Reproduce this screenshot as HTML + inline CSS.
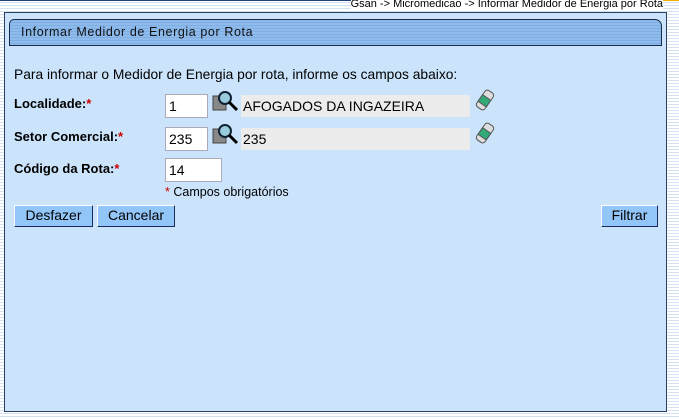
<!DOCTYPE html><html><head><style>
body{margin:0;width:679px;height:419px;overflow:hidden;font-family:"Liberation Sans",sans-serif;
background:repeating-linear-gradient(#fff 0 2px,#d3e3f3 2px 3px);position:relative}
.top{position:absolute;left:0;top:0;width:679px;height:1px;background:#1f3f7f}
.org{position:absolute;left:560px;top:0;width:119px;height:1px;background:#f0b000}
.bc{position:absolute;right:16px;top:-2px;font-size:11px;color:#000;background:#fff;line-height:13px}
.panel{position:absolute;left:4px;top:12px;width:663px;height:400px;background:#cbe4fb;border:1px solid #2a4060;box-sizing:border-box}
.tb{position:absolute;left:4px;top:6px;width:653px;height:27px;box-sizing:border-box;border:1px solid #1a2a4a;border-radius:5px 7px 0 0;
background:repeating-linear-gradient(#8ebbec 0 2px,#7faee2 2px 3px);font-size:12.5px;letter-spacing:0.6px;line-height:25px;padding-left:11px;color:#111}
.t{position:absolute;font-size:13.8px;color:#000}
b.t{font-weight:bold;font-size:13px}
.r{color:#c00}
.in{position:absolute;background:#fff;border:1px solid #aab;height:24px;box-sizing:border-box;font-size:14px;line-height:22px;padding-left:3px}
.ro{position:absolute;background:#ececec;height:22px;font-size:14px;line-height:22px;padding-left:2px}
.btn{position:absolute;top:205px;height:22px;box-sizing:border-box;background:#92c6f8;border:1px solid;border-color:#fff #1a2a5a #1a2a5a #fff;font-size:14px;line-height:19px;text-align:center}
</style></head><body>
<div class="top"></div><div class="org"></div>
<div class="bc">Gsan -&gt; Micromedicao -&gt; Informar Medidor de Energia por Rota</div>
<div class="panel"><div class="tb">Informar Medidor de Energia por Rota</div></div>
<div class="t" style="left:14px;top:67px">Para informar o Medidor de Energia por rota, informe os campos abaixo:</div>
<b class="t" style="left:14px;top:96px">Localidade:<span class="r">*</span></b>
<b class="t" style="left:14px;top:129px">Setor Comercial:<span class="r">*</span></b>
<b class="t" style="left:14px;top:161px">Código da Rota:<span class="r">*</span></b>
<div class="in" style="left:165px;top:94px;width:43px">1</div>
<div class="in" style="left:165px;top:127px;width:43px">235</div>
<div class="in" style="left:165px;top:158px;width:57px">14</div>
<div class="ro" style="left:241px;top:95px;width:227px">AFOGADOS DA INGAZEIRA</div>
<div class="ro" style="left:241px;top:128px;width:227px">235</div>
<svg style="position:absolute;left:212px;top:89px" width="28" height="26"><rect x="1" y="7" width="13" height="14" fill="#888" stroke="#444"/><circle cx="13" cy="9" r="6" fill="#9cd" stroke="#123" stroke-width="2"/><line x1="17" y1="13" x2="25" y2="21" stroke="#000" stroke-width="3"/></svg>
<svg style="position:absolute;left:212px;top:122px" width="28" height="26"><rect x="1" y="7" width="13" height="14" fill="#888" stroke="#444"/><circle cx="13" cy="9" r="6" fill="#9cd" stroke="#123" stroke-width="2"/><line x1="17" y1="13" x2="25" y2="21" stroke="#000" stroke-width="3"/></svg>
<svg style="position:absolute;left:475px;top:89px" width="20" height="22"><g transform="rotate(35 10 11)"><rect x="5" y="1" width="10" height="20" rx="3" fill="#ddd" stroke="#555"/><rect x="5" y="8" width="10" height="8" fill="#3a7" stroke="#555"/></g></svg>
<svg style="position:absolute;left:475px;top:122px" width="20" height="22"><g transform="rotate(35 10 11)"><rect x="5" y="1" width="10" height="20" rx="3" fill="#ddd" stroke="#555"/><rect x="5" y="8" width="10" height="8" fill="#3a7" stroke="#555"/></g></svg>
<div class="t" style="left:165px;top:185px;font-size:12.5px"><span class="r">*</span> Campos obrigatórios</div>
<div class="btn" style="left:14px;width:79px">Desfazer</div>
<div class="btn" style="left:97px;width:78px">Cancelar</div>
<div class="btn" style="left:601px;width:57px">Filtrar</div>
</body></html>
